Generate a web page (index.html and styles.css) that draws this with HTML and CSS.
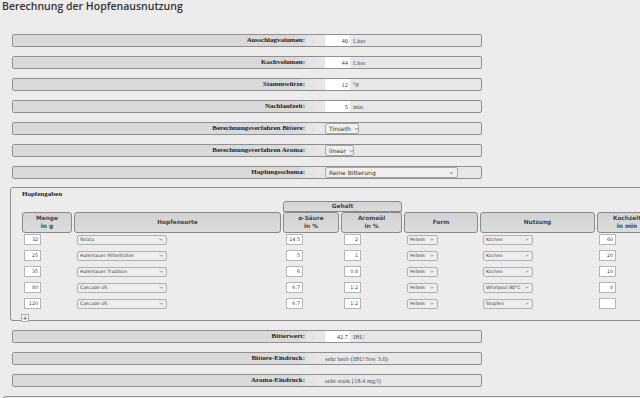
FILE: index.html
```html
<!DOCTYPE html>
<html lang="de">
<head>
<meta charset="utf-8">
<title>Berechnung der Hopfenausnutzung</title>
<link rel="stylesheet" href="styles.css">
</head>
<body>
<h1 class="title">Berechnung der Hopfenausnutzung</h1>

<div class="form top">
  <div class="row"><div class="lbl">Ausschlagvolumen:</div><div class="val"><span class="inp">40</span><span class="unit">Liter</span></div></div>
  <div class="row"><div class="lbl">Kochvolumen:</div><div class="val"><span class="inp">44</span><span class="unit">Liter</span></div></div>
  <div class="row"><div class="lbl">Stammwürze:</div><div class="val"><span class="inp">12</span><span class="unit">°P</span></div></div>
  <div class="row"><div class="lbl">Nachlaufzeit:</div><div class="val"><span class="inp">5</span><span class="unit">min</span></div></div>
  <div class="row"><div class="lbl">Berechnungsverfahren Bittere:</div><div class="val"><span class="sel s-tin">Tinseth<svg class="chev" viewBox="0 0 6 4"><path d="M1 1L3 3L5 1"/></svg></span></div></div>
  <div class="row"><div class="lbl">Berechnungsverfahren Aroma:</div><div class="val"><span class="sel s-lin">linear<svg class="chev" viewBox="0 0 6 4"><path d="M1 1L3 3L5 1"/></svg></span></div></div>
  <div class="row"><div class="lbl">Hopfungsschema:</div><div class="val"><span class="sel s-rb">Reine Bitterung<svg class="chev" viewBox="0 0 6 4"><path d="M1 1L3 3L5 1"/></svg></span></div></div>
</div>

<div class="fs">
  <div class="legend">Hopfengaben</div>
  <div class="thead">
    <div class="th gehalt">Gehalt</div>
    <div class="th c1">Menge<br>in g</div>
    <div class="th c2">Hopfensorte</div>
    <div class="th c3">α-Säure<br>in %</div>
    <div class="th c4">Aromaöl<br>in %</div>
    <div class="th c5">Form</div>
    <div class="th c6">Nutzung</div>
    <div class="th c7">Kochzeit<br>in min</div>
  </div>
  <div class="tbody">
    <div class="tr">
      <div class="td"><span class="tin">32</span></div>
      <div class="td"><span class="tsel w-sorte">Strata<svg class="chev" viewBox="0 0 6 4"><path d="M1 1L3 3L5 1"/></svg></span></div>
      <div class="td"><span class="tin a">14.5</span></div>
      <div class="td"><span class="tin a">2</span></div>
      <div class="td"><span class="tsel w-form">Pellets<svg class="chev" viewBox="0 0 6 4"><path d="M1 1L3 3L5 1"/></svg></span></div>
      <div class="td"><span class="tsel w-nutz">Kochen<svg class="chev" viewBox="0 0 6 4"><path d="M1 1L3 3L5 1"/></svg></span></div>
      <div class="td"><span class="tin">60</span></div>
    </div>
    <div class="tr">
      <div class="td"><span class="tin">25</span></div>
      <div class="td"><span class="tsel w-sorte">Hallertauer Mittelfrüher<svg class="chev" viewBox="0 0 6 4"><path d="M1 1L3 3L5 1"/></svg></span></div>
      <div class="td"><span class="tin a">5</span></div>
      <div class="td"><span class="tin a">1</span></div>
      <div class="td"><span class="tsel w-form">Pellets<svg class="chev" viewBox="0 0 6 4"><path d="M1 1L3 3L5 1"/></svg></span></div>
      <div class="td"><span class="tsel w-nutz">Kochen<svg class="chev" viewBox="0 0 6 4"><path d="M1 1L3 3L5 1"/></svg></span></div>
      <div class="td"><span class="tin">20</span></div>
    </div>
    <div class="tr">
      <div class="td"><span class="tin">35</span></div>
      <div class="td"><span class="tsel w-sorte">Hallertauer Tradition<svg class="chev" viewBox="0 0 6 4"><path d="M1 1L3 3L5 1"/></svg></span></div>
      <div class="td"><span class="tin a">6</span></div>
      <div class="td"><span class="tin a">0.8</span></div>
      <div class="td"><span class="tsel w-form">Pellets<svg class="chev" viewBox="0 0 6 4"><path d="M1 1L3 3L5 1"/></svg></span></div>
      <div class="td"><span class="tsel w-nutz">Kochen<svg class="chev" viewBox="0 0 6 4"><path d="M1 1L3 3L5 1"/></svg></span></div>
      <div class="td"><span class="tin">10</span></div>
    </div>
    <div class="tr">
      <div class="td"><span class="tin">80</span></div>
      <div class="td"><span class="tsel w-sorte">Cascade US<svg class="chev" viewBox="0 0 6 4"><path d="M1 1L3 3L5 1"/></svg></span></div>
      <div class="td"><span class="tin a">6.7</span></div>
      <div class="td"><span class="tin a">1.2</span></div>
      <div class="td"><span class="tsel w-form">Pellets<svg class="chev" viewBox="0 0 6 4"><path d="M1 1L3 3L5 1"/></svg></span></div>
      <div class="td"><span class="tsel w-nutz">Whirlpool 80°C<svg class="chev" viewBox="0 0 6 4"><path d="M1 1L3 3L5 1"/></svg></span></div>
      <div class="td"><span class="tin">0</span></div>
    </div>
    <div class="tr">
      <div class="td"><span class="tin">120</span></div>
      <div class="td"><span class="tsel w-sorte">Cascade US<svg class="chev" viewBox="0 0 6 4"><path d="M1 1L3 3L5 1"/></svg></span></div>
      <div class="td"><span class="tin a">6.7</span></div>
      <div class="td"><span class="tin a">1.2</span></div>
      <div class="td"><span class="tsel w-form">Pellets<svg class="chev" viewBox="0 0 6 4"><path d="M1 1L3 3L5 1"/></svg></span></div>
      <div class="td"><span class="tsel w-nutz">Stopfen<svg class="chev" viewBox="0 0 6 4"><path d="M1 1L3 3L5 1"/></svg></span></div>
      <div class="td"><span class="tin"></span></div>
    </div>
  </div>
  <div class="plus">+</div>
</div>

<div class="form bottom">
  <div class="row"><div class="lbl">Bitterwert:</div><div class="val"><span class="inp">42.7</span><span class="unit">IBU</span></div></div>
  <div class="row"><div class="lbl">Bittere-Eindruck:</div><div class="val"><span class="txt">sehr herb (IBU/Stw 3.6)</span></div></div>
  <div class="row"><div class="lbl">Aroma-Eindruck:</div><div class="val"><span class="txt">sehr stark (18.4 mg/l)</span></div></div>
</div>

<div class="footbox"></div>
</body>
</html>
```

FILE: styles.css
```css
html, body {
  margin: 0;
  padding: 0;
}
body {
  background: #ececec;
  overflow: hidden;
  width: 640px;
  height: 398px;
  color: #333;
}
.title {
  margin: 0;
  padding: 0 0 0 2px;
  height: 14px;
  font-family: "Open Sans", sans-serif;
  font-weight: 600;
  font-size: 10.5px;
  line-height: 13px;
  color: #333;
}
.form {
  display: flex;
  flex-direction: column;
  gap: 9px;
  padding-left: 12px;
}
.form.top { padding-top: 20px; }
.form.bottom { padding-top: 9px; }
.row {
  width: 468px;
  height: 11px;
  border: 1px solid #8f8f8f;
  border-radius: 2px;
  background: #e7e7e7;
  display: flex;
}
.lbl {
  width: 292px;
  padding-right: 10px;
  background: linear-gradient(to right, #d9d9d9 0, #d9d9d9 285px, #e4e4e4 295px, #e4e4e4 100%);
  text-align: right;
  font-family: "Liberation Serif", serif;
  font-weight: bold;
  font-size: 7px;
  line-height: 11px;
  color: #222;
}
.val {
  padding-left: 10px;
  display: flex;
  align-items: center;
  font-family: "Liberation Serif", serif;
  font-size: 6.5px;
  color: #555;
}
.inp {
  box-sizing: border-box;
  width: 25px;
  height: 11px;
  background: #fff;
  text-align: right;
  padding-right: 2px;
  line-height: 11px;
  color: #444;
}
.unit { padding-left: 3px; }
.sel {
  box-sizing: border-box;
  height: 11px;
  border: 1px solid #a9a9a9;
  border-radius: 2px;
  background: #efefef;
  font-family: "DejaVu Sans", sans-serif;
  font-size: 6px;
  line-height: 9px;
  color: #333;
  padding: 0 3px 0 3px;
  display: flex;
  align-items: center;
  justify-content: space-between;
}
.s-tin { width: 34px; }
.s-lin { width: 29px; }
.s-rb { width: 133px; }
.chev {
  width: 5px;
  height: 4px;
  margin-left: 3px;
  flex: none;
}
.chev path {
  fill: none;
  stroke: #666;
  stroke-width: 0.9;
}

.fs {
  margin: 8px 0 0 10px;
  width: 640px;
  height: 134px;
  border: 1px solid #8f8f8f;
  border-radius: 3px;
  box-sizing: border-box;
  padding-left: 11px;
}
.legend {
  height: 13px;
  font-family: "Liberation Serif", serif;
  font-weight: bold;
  font-size: 7px;
  line-height: 12px;
  color: #222;
}
.thead {
  display: grid;
  grid-template-columns: 50px 207px 56px 61px 74px 115px 60px;
  grid-template-rows: 11px 21px;
  column-gap: 2px;
}
.tr {
  display: grid;
  grid-template-columns: 50px 207px 56px 61px 74px 115px 60px;
  column-gap: 2px;
  height: 11px;
}
.th {
  box-sizing: border-box;
  border: 1px solid #8a8a8a;
  border-radius: 3px;
  background: linear-gradient(#d3d3d3, #dcdcdc);
  font-family: "DejaVu Sans", sans-serif;
  font-weight: bold;
  font-size: 5.8px;
  line-height: 7.5px;
  color: #444;
  display: flex;
  align-items: center;
  justify-content: center;
  text-align: center;
}
.gehalt { grid-column: 3 / 5; grid-row: 1; border-radius: 3px 3px 0 0; }
.c1 { grid-column: 1; grid-row: 2; }
.c2 { grid-column: 2; grid-row: 2; }
.c3 { grid-column: 3; grid-row: 2; }
.c4 { grid-column: 4; grid-row: 2; }
.c5 { grid-column: 5; grid-row: 2; }
.c6 { grid-column: 6; grid-row: 2; }
.c7 { grid-column: 7; grid-row: 2; }
.tbody {
  margin-top: 1px;
  display: flex;
  flex-direction: column;
  gap: 5px;
}
.td {
  display: flex;
  align-items: center;
  padding-left: 2px;
}
.tin {
  box-sizing: border-box;
  width: 17px;
  height: 11px;
  background: #fff;
  border: 1px solid #b5b5b5;
  font-family: "DejaVu Sans", sans-serif;
  font-size: 4.8px;
  line-height: 9px;
  text-align: right;
  padding-right: 2px;
  color: #444;
}
.tin.a { margin-left: 1px; }
.tsel {
  box-sizing: border-box;
  height: 10px;
  border: 1px solid #b0b0b0;
  border-radius: 2px;
  background: #ededed;
  font-family: "DejaVu Sans", sans-serif;
  font-size: 4.6px;
  line-height: 8px;
  color: #444;
  padding: 0 3px 0 2px;
  display: flex;
  align-items: center;
  justify-content: space-between;
  margin-left: 1px;
}
.tsel .chev {
  width: 4px;
  height: 3px;
}
.w-sorte { width: 90px; }
.w-form { width: 31px; }
.w-nutz { width: 50px; }
.plus {
  box-sizing: border-box;
  width: 8px;
  height: 8px;
  margin-top: 5px;
  margin-left: -1px;
  border: 1px solid #b0b0b0;
  background: #f2f2f2;
  font-family: "DejaVu Sans", sans-serif;
  font-size: 6px;
  line-height: 6px;
  text-align: center;
  color: #444;
}
.footbox {
  margin: 9px 0 0 2px;
  width: 640px;
  height: 20px;
  border: 1px solid #8f8f8f;
  border-radius: 4px 0 0 0;
  box-sizing: border-box;
}
```
